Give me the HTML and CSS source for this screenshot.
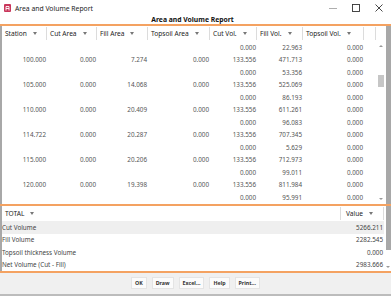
FILE: index.html
```html
<!DOCTYPE html>
<html lang="en">
<head>
    <meta charset="UTF-8">
    <meta name="viewport" content="width=device-width, initial-scale=1.0">
    <title>Area and Volume Report</title>
    <link rel="stylesheet" href="styles.css">
</head>
<body>
    <div class="window">
        <div class="titlebar">
            <svg class="app-icon" width="7" height="8" viewBox="0 0 7 8">
                <rect x="0" y="0" width="7" height="8" rx="1" fill="#c9365b"/>
                <path d="M2 6.5 L2 2.5 L5 2.5 L5 6.5 M2 4.5 L5 4.5" stroke="#fff" stroke-width="0.9" fill="none"/>
            </svg>
            <span class="window-title">Area and Volume Report</span>
            <div class="window-controls">
                <svg width="8" height="8" viewBox="0 0 8 8"><path d="M0 4.5 H8" stroke="#999" stroke-width="0.8"/></svg>
                <svg width="8" height="8" viewBox="0 0 8 8"><rect x="0.5" y="0.5" width="7" height="7" stroke="#333" stroke-width="0.9" fill="none"/></svg>
                <svg width="8" height="8" viewBox="0 0 8 8"><path d="M0.5 0.5 L7.5 7.5 M7.5 0.5 L0.5 7.5" stroke="#333" stroke-width="0.9"/></svg>
            </div>
        </div>

        <div class="report-title">Area and Volume Report</div>

        <div class="grid-area">
            <div class="grid">
                <div class="row head">
                    <div class="hcell">Station<i class="arrow"></i></div>
                    <div class="hcell">Cut Area<i class="arrow"></i></div>
                    <div class="hcell">Fill Area<i class="arrow"></i></div>
                    <div class="hcell">Topsoil Area<i class="arrow"></i></div>
                    <div class="hcell">Cut Vol.<i class="arrow"></i></div>
                    <div class="hcell">Fill Vol.<i class="arrow"></i></div>
                    <div class="hcell">Topsoil Vol.<i class="arrow"></i></div>
                    <div class="hcell"></div>
                </div>
                <div id="rows"></div>
            </div>
            <div class="vscroll">
                <span class="up"></span>
                <span class="thumb"></span>
                <span class="down"></span>
            </div>
            <div class="edge"></div>
        </div>

        <div class="totals">
            <div class="totals-list">
                <div class="trow head">
                    <div class="hcell">TOTAL<i class="arrow"></i></div>
                    <div class="hcell">Value<i class="arrow"></i></div>
                </div>
                <div class="trow shade"><span>Cut Volume</span><span class="num">5266.211</span></div>
                <div class="trow"><span>Fill Volume</span><span class="num">2282.545</span></div>
                <div class="trow"><span>Topsoil thickness Volume</span><span class="num">0.000</span></div>
                <div class="trow"><span>Net Volume (Cut - Fill)</span><span class="num">2983.666</span></div>
            </div>
            <div class="tscroll">
                <span class="tthumb"></span>
                <span class="down"></span>
            </div>
        </div>

        <div class="button-bar">
            <button class="btn">OK</button>
            <button class="btn">Draw</button>
            <button class="btn">Excel...</button>
            <button class="btn">Help</button>
            <button class="btn">Print...</button>
        </div>
    </div>

    <script>
        const data = [
            ['', '', '', '', '0.000', '22.963', '0.000'],
            ['100.000', '0.000', '7.274', '0.000', '133.556', '471.713', '0.000'],
            ['', '', '', '', '0.000', '53.356', '0.000'],
            ['105.000', '0.000', '14.068', '0.000', '133.556', '525.069', '0.000'],
            ['', '', '', '', '0.000', '86.193', '0.000'],
            ['110.000', '0.000', '20.409', '0.000', '133.556', '611.261', '0.000'],
            ['', '', '', '', '0.000', '96.083', '0.000'],
            ['114.722', '0.000', '20.287', '0.000', '133.556', '707.345', '0.000'],
            ['', '', '', '', '0.000', '5.629', '0.000'],
            ['115.000', '0.000', '20.206', '0.000', '133.556', '712.973', '0.000'],
            ['', '', '', '', '0.000', '99.011', '0.000'],
            ['120.000', '0.000', '19.398', '0.000', '133.556', '811.984', '0.000'],
            ['', '', '', '', '0.000', '95.991', '0.000']
        ];

        const rows = document.getElementById('rows');
        data.forEach(values => {
            const row = document.createElement('div');
            row.className = 'row';
            values.forEach(v => {
                const cell = document.createElement('div');
                cell.className = 'cell';
                cell.textContent = v;
                row.appendChild(cell);
            });
            row.appendChild(document.createElement('div'));
            rows.appendChild(row);
        });
    </script>
</body>
</html>
```

FILE: styles.css
```css
* {
    box-sizing: border-box;
}

body {
    margin: 0;
    font-family: "Noto Sans", "Open Sans", sans-serif;
    background-color: #fff;
    color: #333;
}

.window {
    width: 391px;
    height: 296px;
    display: flex;
    flex-direction: column;
    overflow: hidden;
}

.titlebar {
    height: 16px;
    display: flex;
    align-items: center;
    padding-left: 4px;
}

.app-icon {
    display: block;
}

.window-title {
    font-size: 6.8px;
    margin-left: 4px;
    color: #222;
}

.window-controls {
    margin-left: auto;
    display: flex;
    gap: 15px;
    padding-right: 8px;
}

.window-controls svg {
    display: block;
}

.report-title {
    height: 8px;
    line-height: 8px;
    text-align: center;
    font-weight: bold;
    font-size: 6.8px;
    color: #111;
    padding-right: 6px;
    border-bottom: 2px solid #f4a261;
    box-sizing: content-box;
}

.grid-area {
    display: flex;
    height: 178px;
    border-bottom: 2px solid #f4a261;
    box-sizing: content-box;
}

.grid {
    width: 376px;
    border-left: 2px solid #a8a8a8;
}

.row {
    display: grid;
    grid-template-columns: 45px 50px 51px 62px 47px 46px 61px 12px;
    height: 12.5px;
    align-items: center;
    font-size: 6.3px;
    color: #555;
}

.row.head {
    height: 15px;
    color: #222;
    font-size: 6.6px;
}

.hcell {
    display: flex;
    align-items: center;
    height: 13px;
    padding-left: 3px;
    border-right: 1px solid #dcdcdc;
}

.arrow {
    display: inline-block;
    width: 0;
    height: 0;
    margin-left: 6px;
    border-left: 2.5px solid transparent;
    border-right: 2.5px solid transparent;
    border-top: 3px solid #777;
}

.cell {
    text-align: right;
    padding-right: 1px;
}

.vscroll {
    width: 10px;
    display: flex;
    flex-direction: column;
    align-items: center;
    padding-top: 19px;
    padding-bottom: 4px;
}

.up,
.down {
    width: 0;
    height: 0;
    border-left: 2px solid transparent;
    border-right: 2px solid transparent;
}

.up {
    border-bottom: 2px solid #999;
}

.down {
    border-top: 2px solid #999;
    margin-top: auto;
}

.thumb {
    width: 6px;
    height: 12px;
    margin-top: 28px;
    background-color: #c6c6c6;
}

.edge {
    width: 5px;
    background-color: #a8a8a8;
}

.totals {
    display: flex;
    height: 65px;
    border-bottom: 2px solid #f4a261;
    box-sizing: content-box;
}

.totals-list {
    width: 384px;
    border-left: 2px solid #a8a8a8;
}

.trow {
    display: flex;
    justify-content: space-between;
    align-items: center;
    height: 12.5px;
    font-size: 6.3px;
    color: #444;
}

.trow.head {
    height: 15px;
    justify-content: flex-start;
    color: #222;
    font-size: 6.6px;
}

.trow.head .hcell:first-child {
    width: 339px;
    border-right: 1px solid #dcdcdc;
    padding-left: 3px;
}

.trow.head .hcell:last-child {
    width: 43px;
    padding-left: 5px;
    border-right: 1px solid #dcdcdc;
}

.trow.shade {
    background-color: #efefef;
}

.trow .num {
    padding-right: 1px;
}

.tscroll {
    width: 7px;
    display: flex;
    flex-direction: column;
    align-items: center;
    padding-bottom: 3px;
}

.tthumb {
    width: 5px;
    height: 44px;
    background-color: #a8a8a8;
    margin-left: 2px;
}

.button-bar {
    flex: 1;
    background-color: #f0f0f0;
    border-bottom: 2px solid #bcbcbc;
    display: flex;
    justify-content: center;
    align-items: center;
    gap: 5px;
    padding-bottom: 2px;
}

.btn {
    height: 12px;
    padding: 0 3px;
    border: 1px solid #e4e4e4;
    background-color: #fbfbfb;
    font-family: "Noto Sans", "Open Sans", sans-serif;
    font-size: 5.3px;
    font-weight: bold;
    color: #333;
    cursor: pointer;
}

.btn:hover {
    background-color: #eee;
}
```
